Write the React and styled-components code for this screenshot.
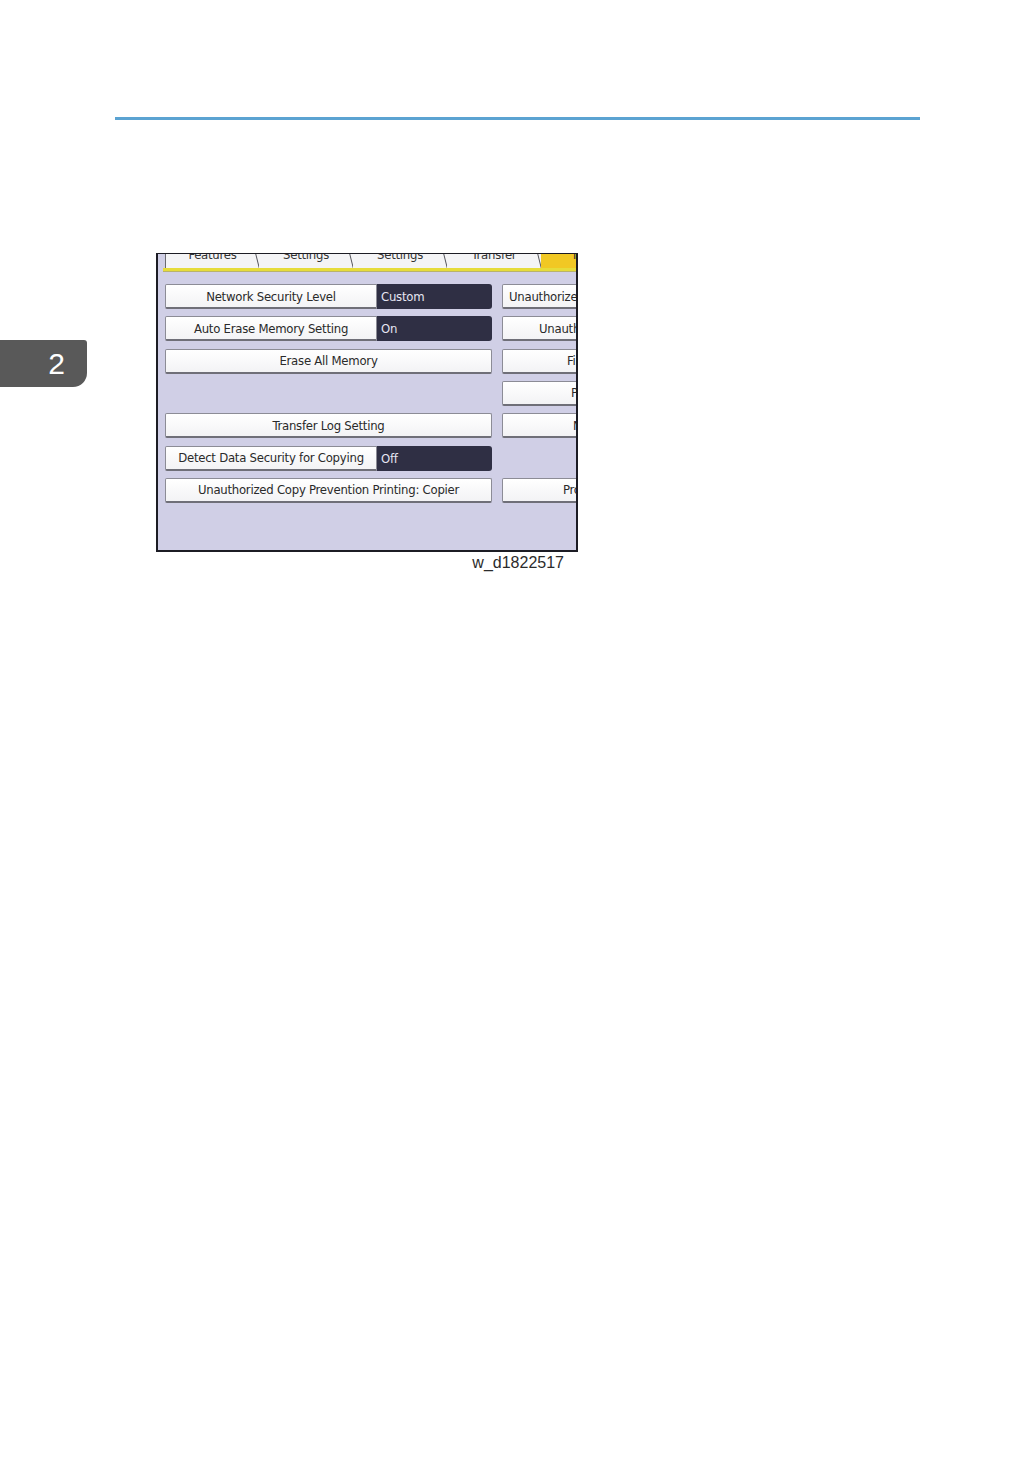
import * as React from "react";
import styled, { createGlobalStyle } from "styled-components";

const GlobalStyle = createGlobalStyle`
  html, body {
    margin: 0;
    padding: 0;
    background: #ffffff;
  }
  body {
    font-family: "Liberation Sans", Arial, sans-serif;
  }
`;

const Page = styled.div`
  width: 1036px;
  height: 1470px;
  background: #ffffff;
  overflow: hidden;
`;

const HeaderRule = styled.div`
  margin: 117px 0 0 115px;
  width: 805px;
  height: 3px;
  background: #5ba3d2;
`;

const Body = styled.div`
  display: grid;
  grid-template-columns: 87px 1fr;
  align-items: start;
`;

const ChapterTab = styled.div`
  margin-top: 220px;
  height: 47px;
  background: #595959;
  border-radius: 0 3px 14px 0;
  display: flex;
  align-items: center;
  justify-content: flex-end;
  padding-right: 22px;
  color: #ffffff;
  font-family: "Liberation Sans", Arial, sans-serif;
  font-size: 30px;
  line-height: 1;
`;

const Figure = styled.div`
  margin: 133px 0 0 69px;
  width: 422px;
  display: flex;
  flex-direction: column;
`;

const Screen = styled.div`
  box-sizing: border-box;
  width: 422px;
  height: 299px;
  background: #d0cfe6;
  border: 2px solid #1c1c24;
  border-top-width: 1px;
  overflow: hidden;
  display: flex;
  flex-direction: column;
  font-family: "DejaVu Sans Condensed", "Liberation Sans", sans-serif;
  letter-spacing: -0.25px;
  color: #2a2a2a;
`;

const TabBar = styled.div`
  display: flex;
  margin-left: 5px;
  padding-left: 2px;
  height: 14px;
  border-bottom: 3px solid #e6dc3a;
  box-shadow: 0 1px 0 #b9b36a;
  flex-shrink: 0;
`;

const Tab = styled.div`
  position: relative;
  flex: 0 0 ${(p) => p.$width}px;
  background: ${(p) => (p.$active ? "#f1c824" : "#f4f4f6")};
  border-left: ${(p) => (p.$first ? "1px solid #6a6a70" : "none")};
  overflow: hidden;
  text-align: ${(p) => (p.$active ? "left" : "center")};
  padding-left: ${(p) => (p.$active ? "30px" : "0")};
  font-size: 13px;
  line-height: 14px;

  &::after {
    content: "";
    position: absolute;
    right: 1px;
    top: 0;
    bottom: 0;
    width: 1px;
    background: #55555c;
    transform: skewX(14deg);
    display: ${(p) => (p.$active ? "none" : "block")};
  }
`;

const TabLabel = styled.span`
  display: block;
  margin-top: -6px;
  color: #333;
`;

const Grid = styled.div`
  display: grid;
  grid-template-columns: 327px 240px;
  grid-auto-rows: 25px;
  column-gap: 10px;
  row-gap: 7.33px;
  padding: 13px 0 0 7px;
`;

const Key = styled.div`
  box-sizing: border-box;
  display: flex;
  align-items: center;
  background: linear-gradient(#ffffff, #f3f3f5);
  border: 1px solid #8c8c96;
  border-bottom: 2px solid #6f6f78;
  border-radius: 2px;
  font-size: 13px;
  white-space: nowrap;
  overflow: hidden;
  grid-column: ${(p) => p.$col};
  grid-row: ${(p) => p.$row};
`;

const WideKey = styled(Key)`
  justify-content: center;
`;

const SplitKey = styled.div`
  display: flex;
  grid-column: 1;
  grid-row: ${(p) => p.$row};
`;

const SplitLabel = styled(Key)`
  flex: 0 0 212px;
  justify-content: center;
  border-radius: 2px 0 0 2px;
`;

const Value = styled.div`
  flex: 1;
  display: flex;
  align-items: center;
  padding-left: 4px;
  background: #2f2f44;
  color: #e6e6f2;
  font-size: 13px;
  border-radius: 0 3px 3px 0;
`;

const SideKey = styled(Key)`
  padding-left: ${(p) => p.$indent}px;
  grid-column: 2;
`;

const Caption = styled.div`
  margin-top: 2px;
  padding-right: 14px;
  text-align: right;
  font-family: "Liberation Sans", Arial, sans-serif;
  font-size: 16px;
  line-height: 18px;
  color: #2b2b2b;
`;

const tabs = [
  { label: "Features", width: 93 },
  { label: "Settings", width: 94 },
  { label: "Settings", width: 94 },
  { label: "Transfer", width: 94 },
  { label: "Tools", width: 94, active: true },
];

const sideKeys = [
  { row: 1, indent: 6, label: "Unauthorized Copy Prevention Printing: Printer" },
  { row: 2, indent: 36, label: "Unauthorized Copy Guard" },
  { row: 3, indent: 64, label: "Firmware Version" },
  { row: 4, indent: 68, label: "Print Setting" },
  { row: 5, indent: 70, label: "Network" },
  { row: 7, indent: 60, label: "Program / Change" },
];

function App() {
  return (
    <Page>
      <GlobalStyle />
      <HeaderRule />
      <Body>
        <ChapterTab>2</ChapterTab>
        <Figure>
          <Screen>
            <TabBar>
              {tabs.map((t, i) => (
                <Tab key={i} $width={t.width} $active={t.active} $first={i === 0}>
                  <TabLabel>{t.label}</TabLabel>
                </Tab>
              ))}
            </TabBar>
            <Grid>
              <SplitKey $row={1}>
                <SplitLabel>Network Security Level</SplitLabel>
                <Value>Custom</Value>
              </SplitKey>
              <SplitKey $row={2}>
                <SplitLabel>Auto Erase Memory Setting</SplitLabel>
                <Value>On</Value>
              </SplitKey>
              <WideKey $col={1} $row={3}>Erase All Memory</WideKey>
              <WideKey $col={1} $row={5}>Transfer Log Setting</WideKey>
              <SplitKey $row={6}>
                <SplitLabel>Detect Data Security for Copying</SplitLabel>
                <Value>Off</Value>
              </SplitKey>
              <WideKey $col={1} $row={7}>Unauthorized Copy Prevention Printing: Copier</WideKey>
              {sideKeys.map((k) => (
                <SideKey key={k.row} $row={k.row} $indent={k.indent}>
                  {k.label}
                </SideKey>
              ))}
            </Grid>
          </Screen>
          <Caption>w_d1822517</Caption>
        </Figure>
      </Body>
    </Page>
  );
}

export default App;
